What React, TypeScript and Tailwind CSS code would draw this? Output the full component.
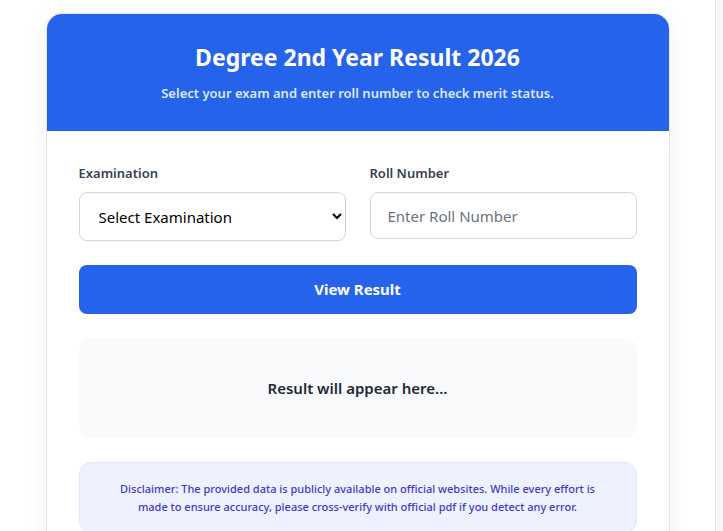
import { useState } from "react";

export default function App() {
  const [exam, setExam] = useState("");
  const [roll, setRoll] = useState("");

  return (
    <div className="flex min-h-[531px] bg-white font-['Noto_Sans',sans-serif]">
      <main className="flex-1 flex justify-center pt-[13px]">
        <div className="w-[624px] self-start rounded-2xl border border-[#e5e7eb] bg-white shadow-[0_4px_24px_rgba(0,0,0,0.06)] overflow-hidden">
          {/* Header */}
          <div className="bg-[#2563eb] h-[117px] flex flex-col items-center pt-[28px] text-center">
            <h1 className="text-[23px] leading-[30px] font-bold text-white">Degree 2nd Year Result 2026</h1>
            <p className="mt-[12px] text-[13px] leading-[18px] font-semibold text-[#dbeafe]">
              Select your exam and enter roll number to check merit status.
            </p>
          </div>

          {/* Form */}
          <div className="px-8 pt-[32px] pb-8 flex flex-col gap-6">
            <div className="grid grid-cols-2 gap-6">
              <div className="flex flex-col">
                <label className="text-[13px] leading-[20px] font-semibold text-[#374151] mb-[9px]">Examination</label>
                <select
                  value={exam}
                  onChange={(e) => setExam(e.target.value)}
                  className="h-[49px] rounded-lg border border-[#d1d5db] bg-white pl-[15px] pr-2 text-[15px] text-black outline-none"
                >
                  <option value="">Select Examination</option>
                  <option value="ba">B.A. 2nd Year</option>
                  <option value="bsc">B.Sc. 2nd Year</option>
                  <option value="bcom">B.Com. 2nd Year</option>
                </select>
              </div>
              <div className="flex flex-col">
                <label className="text-[13px] leading-[20px] font-semibold text-[#374151] mb-[9px]">Roll Number</label>
                <input
                  value={roll}
                  onChange={(e) => setRoll(e.target.value)}
                  placeholder="Enter Roll Number"
                  className="h-[47px] rounded-lg border border-[#d1d5db] bg-white px-[17px] text-[15px] text-black placeholder:text-[#6b7280] outline-none"
                />
              </div>
            </div>

            <button className="h-[49px] rounded-lg bg-[#2563eb] text-[15px] font-bold text-white">
              View Result
            </button>

            <div className="h-[100px] rounded-xl bg-[#f9fafb] flex items-center justify-center">
              <span className="text-[15px] font-semibold text-[#1f2937]">Result will appear here...</span>
            </div>

            <div className="rounded-xl border border-[#e0e7ff] bg-[#eef2ff] px-[36px] pt-[17px] pb-4 text-center">
              <p className="text-[11px] leading-[18px] font-medium text-[#4338ca]">
                Disclaimer: The provided data is publicly available on official websites. While every effort is
                made to ensure accuracy, please cross-verify with official pdf if you detect any error.
              </p>
            </div>
          </div>
        </div>
      </main>
      <aside className="w-[8px] shrink-0 border-l border-[#e5e5e5] bg-[#f7f7f7]" />
    </div>
  );
}
